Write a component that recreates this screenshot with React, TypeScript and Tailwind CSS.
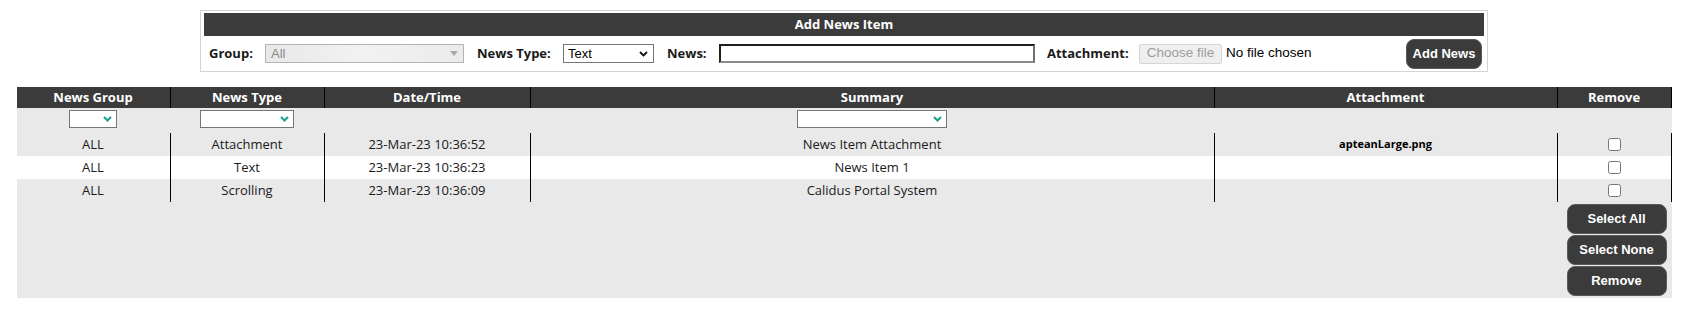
import React from 'react'

const rows = [
  { group: 'ALL', type: 'Attachment', date: '23-Mar-23 10:36:52', summary: 'News Item Attachment', file: 'apteanLarge.png' },
  { group: 'ALL', type: 'Text', date: '23-Mar-23 10:36:23', summary: 'News Item 1', file: '' },
  { group: 'ALL', type: 'Scrolling', date: '23-Mar-23 10:36:09', summary: 'Calidus Portal System', file: '' },
]

const cols = 'grid grid-cols-[153px_154px_206px_684px_343px_115px]'

function FilterSelect({ width }: { width: string }) {
  return (
    <div className={`${width} h-[18px] bg-white border border-[#767676] flex items-center justify-end pr-[4px]`}>
      <svg width="9" height="6" viewBox="0 0 9 6">
        <path d="M1 1 L4.5 4.5 L8 1" fill="none" stroke="#1a9e88" strokeWidth="2" />
      </svg>
    </div>
  )
}

function DarkButton({ label, className = '' }: { label: string; className?: string }) {
  return (
    <button
      className={`bg-[#3b3b3b] text-white font-bold text-[13px] rounded-[8px] border border-[#5a5a5a] flex items-center justify-center ${className}`}
      style={{ fontFamily: '"Liberation Sans", Arial, sans-serif' }}
    >
      {label}
    </button>
  )
}

export default function App() {
  return (
    <div className="w-[1688px] h-[311px] bg-white text-[13px] text-[#1a1a1a]" style={{ fontFamily: '"Open Sans", "Noto Sans", sans-serif' }}>
      {/* Add news form */}
      <div className="mx-auto mt-[10px] w-[1288px] h-[62px] border border-[#d4d4d4] px-[3px] pt-[2px]">
        <div className="h-[23px] bg-[#3b3b3b] text-white font-bold flex items-center justify-center">Add News Item</div>
        <div className="h-[35px] flex items-center pl-[5px] pr-[2px]">
          <span className="w-[56px] font-bold">Group:</span>
          <div className="w-[199px] h-[19px] border border-[#b4b4b4] bg-gradient-to-r from-[#e8e8e8] via-[#f2f2f2] to-[#ebebeb] flex items-center justify-between pl-[5px] pr-[5px] text-[#8a8a8a]" style={{ fontFamily: '"Liberation Sans", Arial, sans-serif' }}>
            <span>All</span>
            <svg width="8" height="5" viewBox="0 0 8 5"><path d="M0 0 L8 0 L4 5 Z" fill="#a8a8a8" /></svg>
          </div>
          <span className="ml-[13px] w-[86px] font-bold">News Type:</span>
          <div className="w-[91px] h-[19px] border border-[#767676] bg-white flex items-center justify-between pl-[4px] pr-[5px] text-black" style={{ fontFamily: '"Liberation Sans", Arial, sans-serif' }}>
            <span>Text</span>
            <svg width="9" height="6" viewBox="0 0 9 6"><path d="M1 1 L4.5 4.5 L8 1" fill="none" stroke="#111" strokeWidth="1.8" /></svg>
          </div>
          <span className="ml-[13px] w-[52px] font-bold">News:</span>
          <div className="w-[316px] h-[19px] bg-white border-2 border-t-[#1f1f1f] border-l-[#1f1f1f] border-r-[#6f6f6f] border-b-[#8a8a8a]" />
          <span className="ml-[12px] w-[92px] font-bold">Attachment:</span>
          <div className="w-[83px] h-[20px] bg-[#efefef] border border-[#d6d6d6] rounded-[2px] flex items-center justify-center text-[#9d9d9d] text-[13.5px]" style={{ fontFamily: '"Liberation Sans", Arial, sans-serif' }}>
            Choose file
          </div>
          <span className="ml-[4px] text-black text-[13.5px]" style={{ fontFamily: '"Liberation Sans", Arial, sans-serif' }}>No file chosen</span>
          <DarkButton label="Add News" className="ml-auto w-[76px] h-[30px]" />
        </div>
      </div>

      {/* News table */}
      <div className="mx-auto mt-[15px] w-[1655px]">
        <div className={`${cols} h-[21px] bg-[#3b3b3b] text-white font-bold`}>
          <div className="flex items-center justify-center">News Group</div>
          <div className="flex items-center justify-center border-l border-black">News Type</div>
          <div className="flex items-center justify-center border-l border-black">Date/Time</div>
          <div className="flex items-center justify-center border-l border-black">Summary</div>
          <div className="flex items-center justify-center border-l border-black">Attachment</div>
          <div className="flex items-center justify-center border-l border-r border-black">Remove</div>
        </div>
        <div className={`${cols} h-[25px] bg-[#e9e9e9]`}>
          <div className="flex justify-center pt-[2px]"><FilterSelect width="w-[48px]" /></div>
          <div className="flex justify-center pt-[2px]"><FilterSelect width="w-[94px]" /></div>
          <div />
          <div className="flex justify-center pt-[2px]"><FilterSelect width="w-[150px]" /></div>
          <div />
          <div />
        </div>
        {rows.map((r, i) => (
          <div key={i} className={`${cols} h-[23px] ${i % 2 === 1 ? 'bg-white' : 'bg-[#e9e9e9]'}`}>
            <div className="flex items-center justify-center">{r.group}</div>
            <div className="flex items-center justify-center border-l border-black">{r.type}</div>
            <div className="flex items-center justify-center border-l border-black">{r.date}</div>
            <div className="flex items-center justify-center border-l border-black">{r.summary}</div>
            <div className="flex items-center justify-center border-l border-black text-[11px] font-bold text-black">{r.file}</div>
            <div className="flex items-center justify-center border-l border-r border-black">
              <input type="checkbox" className="m-0 w-[13px] h-[13px]" />
            </div>
          </div>
        ))}
        <div className={`${cols} h-[96px] bg-[#e9e9e9]`}>
          <div className="col-span-5" />
          <div className="flex flex-col gap-[1px] pt-[2px] pl-[10px]">
            <DarkButton label="Select All" className="w-[100px] h-[30px]" />
            <DarkButton label="Select None" className="w-[100px] h-[30px]" />
            <DarkButton label="Remove" className="w-[100px] h-[30px]" />
          </div>
        </div>
      </div>
    </div>
  )
}
